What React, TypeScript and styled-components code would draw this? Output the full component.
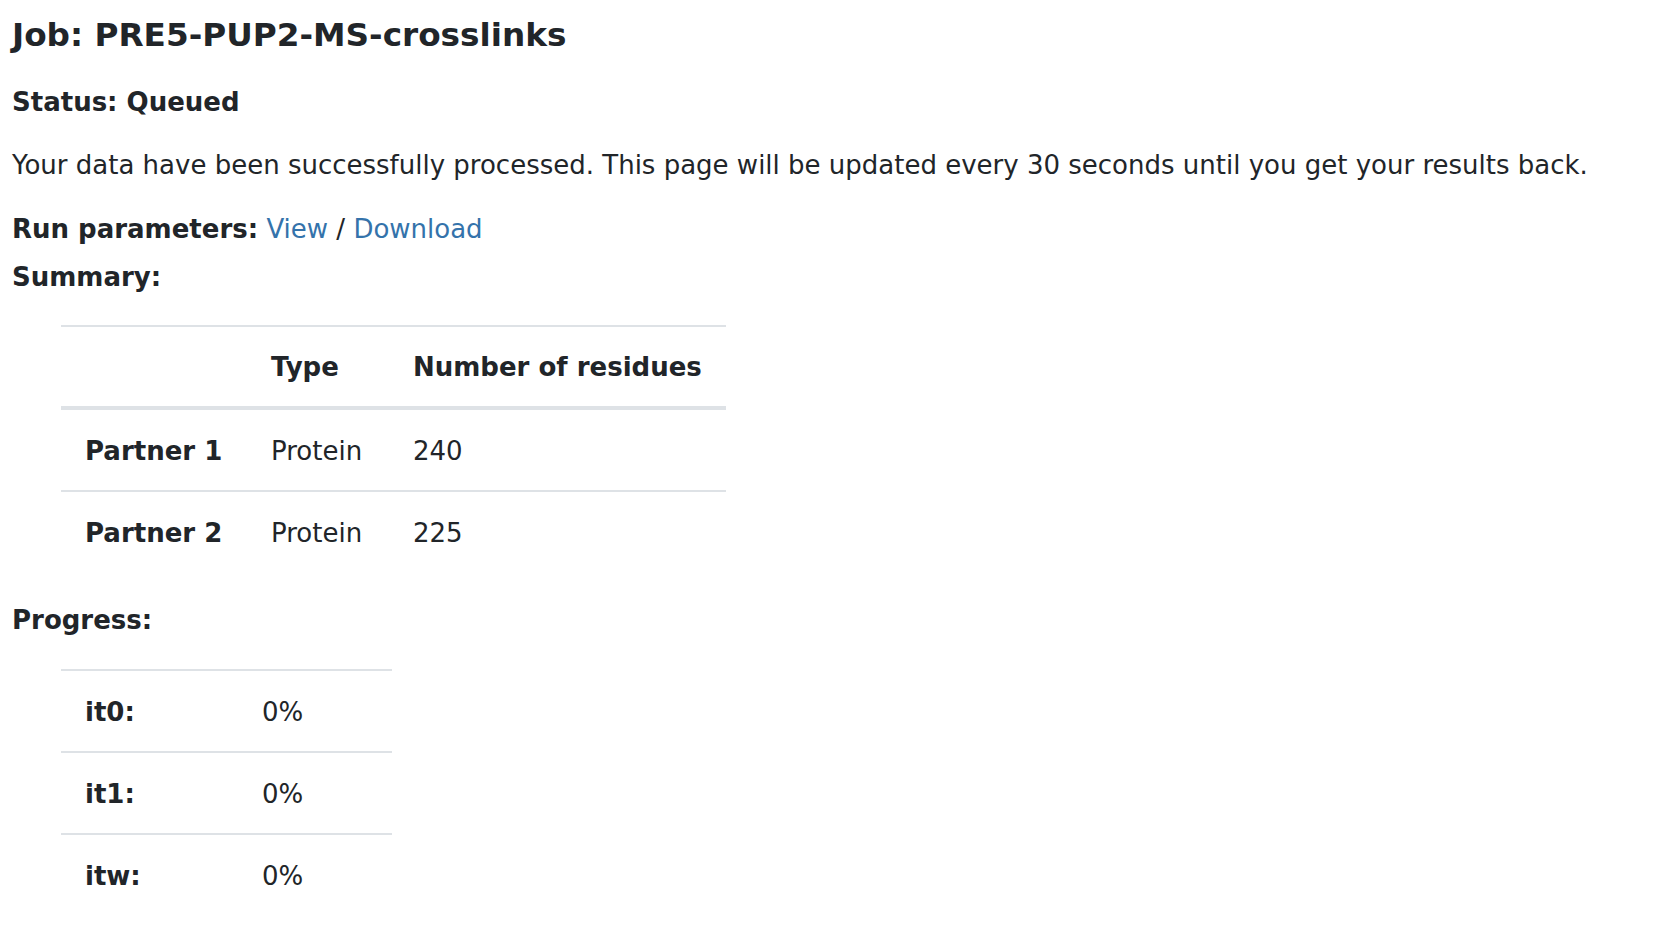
import React from "react";
import styled, { createGlobalStyle } from "styled-components";

const GlobalStyle = createGlobalStyle`
  html, body {
    margin: 0;
    padding: 0;
    background: #ffffff;
  }
  body {
    font-family: "DejaVu Sans", Verdana, sans-serif;
    color: #212529;
    font-size: 26px;
    line-height: 39px;
  }
`;

const Page = styled.main`
  display: flex;
  flex-direction: column;
  align-items: flex-start;
  padding: 16px 12px 40px 12px;
`;

const Title = styled.h1`
  margin: 0;
  font-size: 32.7px;
  line-height: 39px;
  font-weight: bold;
`;

const Status = styled.h2`
  margin: 28px 0 0;
  font-size: 26px;
  line-height: 39px;
  font-weight: bold;
`;

const Text = styled.p`
  margin: 24px 0 0;
`;

const Line = styled.div<{ $gap: number }>`
  margin-top: ${(p) => p.$gap}px;
`;

const Label = styled.strong`
  font-weight: bold;
`;

const Link = styled.a`
  color: #3473ab;
  text-decoration: none;
`;

const Table = styled.table<{ $gap: number }>`
  margin: ${(p) => p.$gap}px 0 0 49px;
  border-collapse: collapse;
  border-top: 2px solid #dee2e6;
  table-layout: fixed;
`;

const HeadCell = styled.th<{ $width?: number }>`
  text-align: left;
  font-weight: bold;
  padding: 21px 24px 19px;
  border-bottom: 4px solid #dee2e6;
  white-space: nowrap;
  box-sizing: border-box;
  ${(p) => (p.$width ? `width: ${p.$width}px;` : "")}
`;

const RowHead = styled.th<{ $width?: number }>`
  text-align: left;
  font-weight: bold;
  padding: 22px 24px 19px;
  white-space: nowrap;
  box-sizing: border-box;
  ${(p) => (p.$width ? `width: ${p.$width}px;` : "")}
`;

const Cell = styled.td<{ $width?: number }>`
  padding: 22px 24px 19px;
  white-space: nowrap;
  box-sizing: border-box;
  ${(p) => (p.$width ? `width: ${p.$width}px;` : "")}
`;

const Row = styled.tr<{ $divided?: boolean }>`
  border-top: ${(p) => (p.$divided ? "2px solid #dee2e6" : "none")};
`;

const partners = [
  { name: "Partner 1", type: "Protein", residues: 240 },
  { name: "Partner 2", type: "Protein", residues: 225 },
];

const progress = [
  { name: "it0:", value: "0%" },
  { name: "it1:", value: "0%" },
  { name: "itw:", value: "0%" },
];

export default function App() {
  return (
    <>
      <GlobalStyle />
      <Page>
        <Title>Job: PRE5-PUP2-MS-crosslinks</Title>
        <Status>Status: Queued</Status>
        <Text>
          Your data have been successfully processed. This page will be updated
          every 30 seconds until you get your results back.
        </Text>
        <Line $gap={25}>
          <Label>Run parameters:</Label> <Link href="#">View</Link> /{" "}
          <Link href="#">Download</Link>
        </Line>
        <Line $gap={9}>
          <Label>Summary:</Label>
        </Line>
        <Table $gap={28}>
          <thead>
            <tr>
              <HeadCell $width={186} />
              <HeadCell $width={142}>Type</HeadCell>
              <HeadCell $width={335}>Number of residues</HeadCell>
            </tr>
          </thead>
          <tbody>
            {partners.map((p, i) => (
              <Row key={p.name} $divided={i > 0}>
                <RowHead>{p.name}</RowHead>
                <Cell>{p.type}</Cell>
                <Cell>{p.residues}</Cell>
              </Row>
            ))}
          </tbody>
        </Table>
        <Line $gap={29}>
          <Label>Progress:</Label>
        </Line>
        <Table $gap={29}>
          <tbody>
            {progress.map((p, i) => (
              <Row key={p.name} $divided={i > 0}>
                <RowHead $width={177}>{p.name}</RowHead>
                <Cell $width={154}>{p.value}</Cell>
              </Row>
            ))}
          </tbody>
        </Table>
      </Page>
    </>
  );
}
